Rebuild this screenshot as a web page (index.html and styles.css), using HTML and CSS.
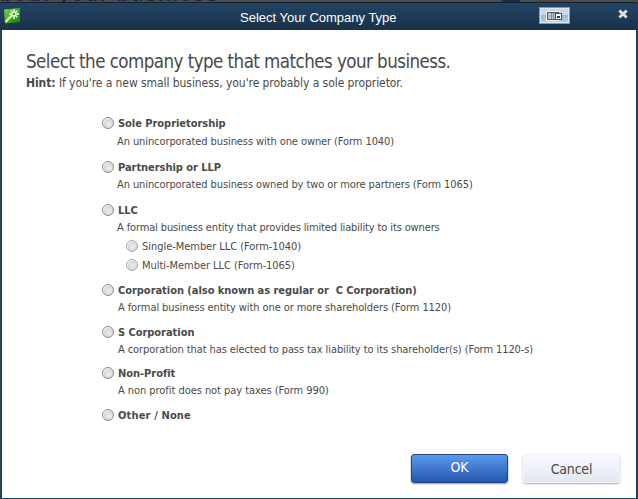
FILE: index.html
```
<!DOCTYPE html>
<html lang="en">
  <head>
    <meta charset="UTF-8" />
    <title>Select Your Company Type</title>
    <link rel="stylesheet" href="styles.css">
  </head>
  <body>
    <div class="backdrop"><span class="page-title">bout your business</span><span class="page-mark"></span></div>

    <div class="dialog">
      <div class="titlebar">
        <svg class="app-icon" width="16" height="16" viewBox="0 0 16 16">
          <defs>
            <linearGradient id="green" x1="0" y1="0" x2="1" y2="1">
              <stop offset="0" stop-color="#8fd052" />
              <stop offset="0.5" stop-color="#36ad22" />
              <stop offset="1" stop-color="#0f850b" />
            </linearGradient>
          </defs>
          <path d="M0 1.5 L16 0 V14 L1 15.5 Z" fill="url(#green)" />
          <path d="M1.5 14 L8 7" stroke="#e4ef8a" stroke-width="2.4" />
          <path d="M10 1 V11 M5 6 H15 M6.7 2.7 L13.3 9.3 M13.3 2.7 L6.7 9.3" stroke="#f4fff0" stroke-width="1.5" />
          <circle cx="10" cy="6" r="1.3" fill="#3b9b38" />
        </svg>
        <span class="title">Select Your Company Type</span>
        <button type="button" class="capture" aria-label="Switch display">
          <svg width="17" height="10" viewBox="0 0 17 10" shape-rendering="crispEdges">
            <rect x="0" y="0" width="13" height="10" fill="#f5f4f0" />
            <rect x="1" y="1" width="12" height="8" fill="#535a73" />
            <rect x="2" y="2" width="10" height="6" fill="#b4c3d6" />
            <path d="M5.5 2 V8 M7.5 2 V8" stroke="#7c88a0" />
            <rect x="9" y="2" width="7" height="7" fill="#4a4c58" />
            <rect x="10" y="3" width="5" height="5" fill="#fff" />
            <rect x="11" y="5" width="3" height="2" fill="#3b3d48" />
          </svg>
        </button>
        <button type="button" class="close" aria-label="Close">
          <svg width="10" height="10" viewBox="0 0 10 10">
            <path d="M1.3 1.5 L8.7 8.5 M8.7 1.5 L1.3 8.5" stroke="#dedede" stroke-width="3" />
          </svg>
        </button>
      </div>

      <form class="content">
        <h1>Select the company type that matches your business.</h1>
        <p class="hint"><b>Hint:</b> <span>If you're a new small business, you're probably a sole proprietor.</span></p>

        <div class="options">
          <div class="option sole">
            <label><input type="radio" name="type" /><b>Sole Proprietorship</b></label>
            <p>An unincorporated business with one owner (Form 1040)</p>
          </div>
          <div class="option partnership">
            <label><input type="radio" name="type" /><b>Partnership or LLP</b></label>
            <p>An unincorporated business owned by two or more partners (Form 1065)</p>
          </div>
          <div class="option llc">
            <label><input type="radio" name="type" /><b>LLC</b></label>
            <p>A formal business entity that provides limited liability to its owners</p>
            <div class="sub-options">
              <label><input type="radio" name="llc" /><span>Single-Member LLC (Form-1040)</span></label>
              <label><input type="radio" name="llc" /><span>Multi-Member LLC (Form-1065)</span></label>
            </div>
          </div>
          <div class="option corp">
            <label><input type="radio" name="type" /><b>Corporation (also known as regular or&nbsp; C Corporation)</b></label>
            <p>A formal business entity with one or more shareholders (Form 1120)</p>
          </div>
          <div class="option s-corp">
            <label><input type="radio" name="type" /><b>S Corporation</b></label>
            <p>A corporation that has elected to pass tax liability to its shareholder(s) (Form 1120-s)</p>
          </div>
          <div class="option non-profit">
            <label><input type="radio" name="type" /><b>Non-Profit</b></label>
            <p>A non profit does not pay taxes (Form 990)</p>
          </div>
          <div class="option other">
            <label><input type="radio" name="type" /><b>Other / None</b></label>
          </div>
        </div>

        <div class="actions">
          <button type="button" class="btn ok">OK</button>
          <button type="button" class="btn cancel">Cancel</button>
        </div>
      </form>
    </div>
  </body>
</html>
```
FILE: styles.css
```
* {
  box-sizing: border-box;
}

body {
  margin: 0;
  width: 638px;
  height: 499px;
  overflow: hidden;
  background: #484848;
  color: #4a4a4a;
  font-family: "DejaVu Sans Condensed", "DejaVu Sans", Tahoma, sans-serif;
  font-stretch: condensed;
  font-size: 11px;
}

h1,
p {
  margin: 0;
  font-weight: normal;
  white-space: nowrap;
}

button {
  padding: 0;
  border: none;
  background: none;
  font-family: inherit;
}

.backdrop {
  display: flex;
  justify-content: space-between;
  height: 2px;
  overflow: hidden;
  background: #4b4b4b;
}

.page-title {
  margin-top: -17px;
  color: #1d2440;
  font: bold 20px/22px "Liberation Sans", Arial, sans-serif;
  letter-spacing: 1.9px;
  white-space: nowrap;
}

.page-mark {
  width: 18px;
  height: 2px;
  margin-right: 118px;
  background: #20284a;
}

.dialog {
  height: 497px;
  display: flex;
  flex-direction: column;
  border: 1px solid #1f4160;
  border-width: 0 2px 1px;
  border-radius: 3px 3px 0 0;
  background: #1f4160;
}

.titlebar {
  flex: none;
  display: flex;
  align-items: center;
  height: 28px;
  margin: 0 -2px;
  padding: 0 10px 0 4px;
  border-top: 1px solid #13202e;
  border-radius: 3px 3px 0 0;
  background: linear-gradient(#234464, #1a3149);
}

.app-icon {
  flex: none;
  margin-top: -2px;
}

.title {
  flex: none;
  margin-left: 220px;
  width: 158px;
  padding-top: 3px;
  color: #fff;
  font: 13px/18px "Liberation Sans", Arial, sans-serif;
  white-space: nowrap;
}

.capture {
  flex: none;
  display: flex;
  align-items: center;
  justify-content: center;
  width: 31px;
  height: 17px;
  margin: -2px 0 0 141px;
  border: 1px solid #8496b2;
  box-shadow: inset 0 0 0 1px #d9e8f7;
  background: linear-gradient(#c5d8ec 48%, #9bb7d3 50%, #b5d2ec);
}

.capture svg {
  flex: none;
}

.close {
  margin: -5px 0 0 auto;
  width: 10px;
  height: 10px;
}

.close svg {
  display: block;
}

.content {
  flex: 1;
  display: flex;
  flex-direction: column;
  padding: 20px 16px 15px 24px;
  background: #fff;
}

h1 {
  font-size: 18.6px;
  line-height: 24px;
  letter-spacing: -0.55px;
}

.hint {
  font-size: 12px;
  line-height: 18px;
  letter-spacing: -0.07px;
}

.options {
  margin: 24px 0 0 76px;
}

.option label {
  display: flex;
  align-items: center;
  height: 14px;
  letter-spacing: -0.04px;
}

.option p {
  margin: 5px 0 0 15px;
  line-height: 14px;
  letter-spacing: -0.09px;
}

.option input {
  appearance: none;
  flex: none;
  width: 12px;
  height: 12px;
  margin: 0 4px 0 0;
  border: 1px solid #8c8c8c;
  border-radius: 50%;
  background: radial-gradient(circle at 60% 60%, #eee, #d6d6d6 58%, #f4f4f4 62%);
}

.option.sole {
  height: 44px;
}

.option.partnership {
  height: 43px;
}

.option.llc {
  height: 80px;
}

.option.corp {
  height: 42px;
}

.option.s-corp {
  height: 41px;
}

.option.non-profit {
  height: 42px;
}

.option.partnership p,
.option.llc p,
.option.corp p,
.option.s-corp p,
.option.non-profit p {
  margin-top: 4px;
}

.option.corp p,
.option.s-corp p,
.option.non-profit p {
  margin-left: 16px;
}

.option.llc p {
  letter-spacing: -0.13px;
}

.option.non-profit p {
  letter-spacing: -0.05px;
}

.option.other label {
  letter-spacing: 0.15px;
}

.sub-options {
  display: grid;
  gap: 5px;
  margin: 4px 0 0 24px;
}

.sub-options input {
  border-color: #aaa;
}

.actions {
  display: flex;
  align-items: flex-start;
  gap: 15px;
  justify-content: flex-end;
  margin-top: auto;
}

.btn {
  height: 29px;
  border-radius: 3px;
  font-size: 14px;
  letter-spacing: -0.2px;
}

.ok {
  width: 97px;
  padding-bottom: 3px;
  border: 1px solid #1f4289;
  background: linear-gradient(#5a9bef, #2456ad);
  box-shadow: 0 1px 2px #999;
  color: #fff;
}

.cancel {
  width: 97px;
  border: 1px solid #f1f3f8;
  background: linear-gradient(#f8faff, #e2e7f0);
  box-shadow: 0 1px 2px #aaa;
  color: #4a4a4a;
}
```
